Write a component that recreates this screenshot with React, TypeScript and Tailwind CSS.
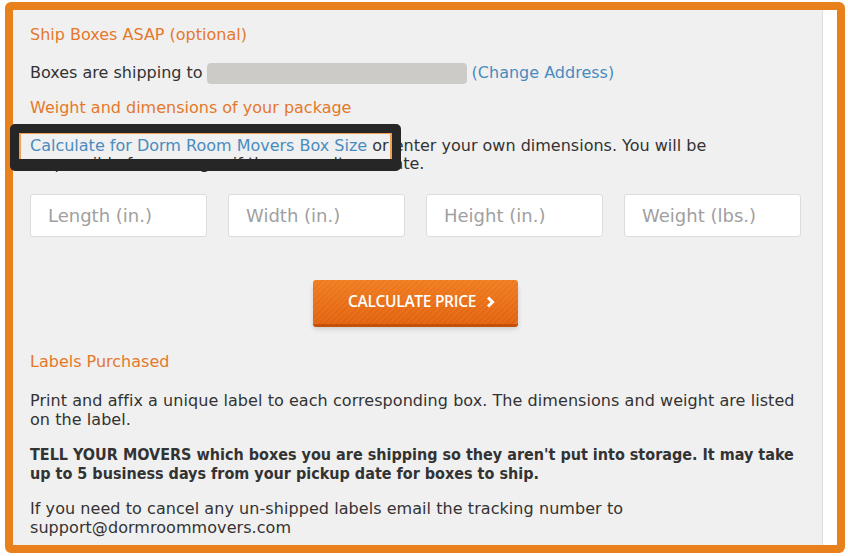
import React from 'react';

const fields = ['Length (in.)', 'Width (in.)', 'Height (in.)', 'Weight (lbs.)'];

export default function App() {
  return (
    <div className="relative w-[848px] h-[556px] bg-white pt-[2px] pl-[5px]" style={{ fontFamily: '"DejaVu Sans", Verdana, sans-serif' }}>
      <div className="w-[840px] h-[551px] border-[8px] border-[#e8801c] rounded-[6px] flex overflow-hidden">
        <div className="w-[810px] h-full bg-[#f0f0f0] border-r border-[#dcdcdc] pl-[17px] pr-[20px] pt-[14px] text-[#333] text-[16px]">
          <h2 className="text-[16px] leading-[22px] text-[#e5782a]">Ship Boxes ASAP (optional)</h2>

          <div className="mt-[16px] flex items-center leading-[22px]">
            <span>Boxes are shipping to</span>
            <span className="ml-[4px] w-[260px] h-[21px] rounded-[4px] bg-[#cdcbc8]" />
            <a className="ml-[5px] text-[#4a8bbf]">(Change Address)</a>
          </div>

          <h2 className="mt-[13px] text-[16px] leading-[22px] text-[#e5782a]">Weight and dimensions of your package</h2>

          <p className="mt-[18px] leading-[18px]">
            <a className="text-[#4a8bbf]">Calculate for Dorm Room Movers Box Size</a> or enter your own dimensions. You will be
            responsible for overages if these aren&apos;t accurate.
          </p>

          <div className="mt-[21px] flex gap-[21px]">
            {fields.map((f) => (
              <div
                key={f}
                className="w-[177px] h-[43px] bg-white border border-[#dcdcdc] rounded-[3px] flex items-center pl-[17px] text-[18px] text-[#a0a0a0]"
              >
                {f}
              </div>
            ))}
          </div>

          <div className="mt-[43px] flex justify-center pr-[1px]">
            <button
              className="w-[205px] h-[44px] rounded-[3px] flex items-center justify-center gap-[10px] pl-[12px] text-white text-[15.5px] font-semibold tracking-[-0.3px] bg-[repeating-linear-gradient(135deg,rgba(255,255,255,0.05)_0px,rgba(255,255,255,0.05)_2px,transparent_2px,transparent_4px),linear-gradient(#f07c1e,#e2620e)] shadow-[0_3px_0_#c4500a,0_5px_5px_rgba(0,0,0,0.15)]"
              style={{ fontFamily: '"Open Sans", sans-serif' }}
            >
              CALCULATE PRICE
              <svg width="9" height="12" viewBox="0 0 9 12">
                <path d="M2 1.5 L6.5 6 L2 10.5" fill="none" stroke="white" strokeWidth="3" strokeLinejoin="miter" />
              </svg>
            </button>
          </div>

          <h2 className="mt-[27px] text-[16px] leading-[22px] text-[#e5782a]">Labels Purchased</h2>

          <p className="mt-[18px] leading-[19px] tracking-[0.06px]">
            Print and affix a unique label to each corresponding box. The dimensions and weight are listed on the label.
          </p>
          <p className="mt-[16px] mr-[-10px] leading-[19px] font-bold" style={{ fontFamily: '"DejaVu Sans Condensed", "DejaVu Sans", sans-serif' }}>
            TELL YOUR MOVERS which boxes you are shipping so they aren&apos;t put into storage. It may take up to 5 business days from your pickup date for boxes to ship.
          </p>
          <p className="mt-[16px] leading-[19px] tracking-[0.06px]">
            If you need to cancel any un-shipped labels email the tracking number to support@dormroommovers.com
          </p>
        </div>
      </div>

      {/* annotation box */}
      <div className="absolute left-[10px] top-[124px] w-[391px] h-[47px] rounded-[5px] border-[#262626] border-t-[9px] border-x-[9px] border-b-[12px]">
        <div className="h-full border-x-2 border-t border-[#f0a050]" />
      </div>
    </div>
  );
}
